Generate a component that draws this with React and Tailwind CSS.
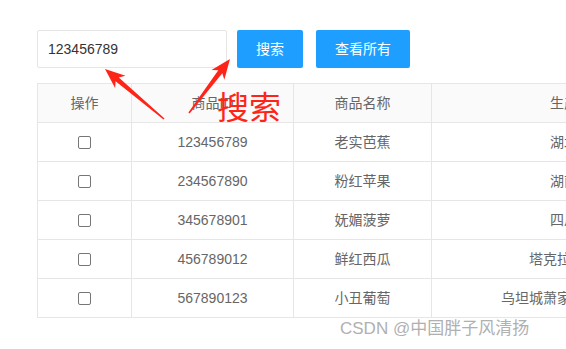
import React from "react";

const rows = [
  ["123456789", "老实芭蕉", "湖北省"],
  ["234567890", "粉红苹果", "湖南省"],
  ["345678901", "妩媚菠萝", "四川省"],
  ["456789012", "鲜红西瓜", "塔克拉玛干沙"],
  ["567890123", "小丑葡萄", "乌坦城萧家族炎帝坟前"],
];

const font = { fontFamily: '"Liberation Sans", "Noto Sans CJK SC", sans-serif' };

export default function App() {
  return (
    <div className="relative w-[566px] h-[349px] overflow-hidden bg-white text-[14px]" style={font}>
      <div className="pt-[30px] pl-[37px]">
        <div className="flex items-center h-[38px]">
          <div className="w-[190px] h-[38px] border border-[#e6e6e6] rounded-[2px] flex items-center pl-[10px] text-[#333]">
            123456789
          </div>
          <button className="ml-[10px] h-[38px] w-[66px] bg-[#1E9FFF] text-white rounded-[2px] text-[14px]">搜索</button>
          <button className="ml-[13px] h-[38px] w-[94px] bg-[#1E9FFF] text-white rounded-[2px] text-[14px]">查看所有</button>
        </div>
        <table className="mt-[15px] table-fixed border-collapse w-[673px] text-[#666]">
          <colgroup>
            <col className="w-[94px]" />
            <col className="w-[162px]" />
            <col className="w-[138px]" />
            <col className="w-[279px]" />
          </colgroup>
          <thead>
            <tr className="bg-[#fafafa]">
              {["操作", "商品ID", "商品名称", "生产地"].map((h) => (
                <th key={h} className="h-[39px] p-0 font-normal text-center border border-[#e6e6e6]">{h}</th>
              ))}
            </tr>
          </thead>
          <tbody>
            {rows.map((r) => (
              <tr key={r[0]}>
                <td className="h-[39px] p-0 text-center border border-[#e6e6e6]">
                  <div className="flex items-center justify-center">
                    <div className="w-[13px] h-[13px] border border-[#767676] rounded-[2px] bg-white" />
                  </div>
                </td>
                <td className="h-[39px] p-0 text-center border border-[#e6e6e6]">{r[0]}</td>
                <td className="h-[39px] p-0 text-center border border-[#e6e6e6]">{r[1]}</td>
                <td className="h-[39px] p-0 text-center border border-[#e6e6e6] whitespace-nowrap">{r[2]}</td>
              </tr>
            ))}
          </tbody>
        </table>
      </div>

      <svg className="absolute left-0 top-0 pointer-events-none" width="566" height="349">
        <polygon
          fill="#ff2418"
          points="105,69 125.5,75.8 118.8,77.4 164.5,118.4 163.5,119.6 115.6,81.3 115.1,88"
        />
        <polygon
          fill="#ff2418"
          points="230,59 224.3,79.7 222.3,73.3 189.6,113.5 188.4,112.5 218.3,70.2 211.5,70.1"
        />
      </svg>
      <div className="absolute left-[217px] top-[85px] text-[32px] leading-[40px] text-[#ff2418]" style={{ fontFamily: '"Noto Sans CJK SC", sans-serif' }}>
        搜索
      </div>
      <div className="absolute left-[340px] top-[317px] text-[17px] leading-[24px] text-[#b0b0b0]" style={{ fontFamily: '"Liberation Sans", "Noto Sans CJK SC", sans-serif' }}>
        CSDN @中国胖子风清扬
      </div>
    </div>
  );
}
